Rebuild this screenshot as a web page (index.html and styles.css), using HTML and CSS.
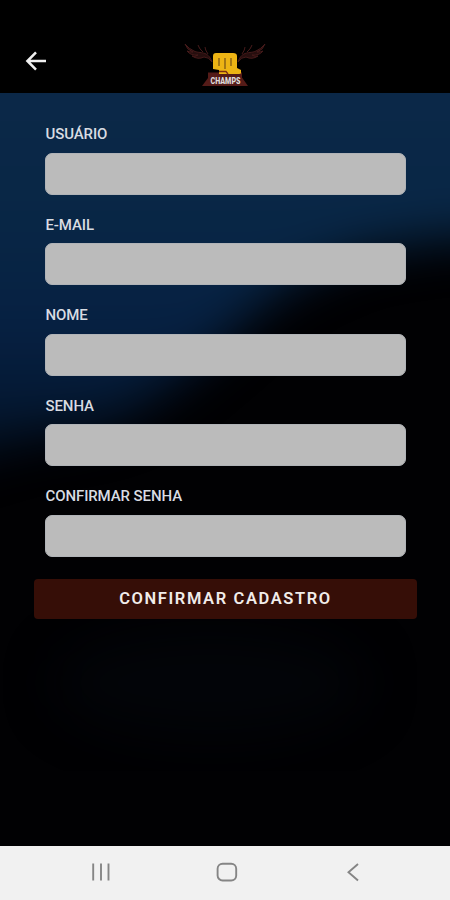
FILE: index.html
```html
<!DOCTYPE html>
<html lang="pt-BR">
<head>
<meta charset="utf-8">
<meta name="viewport" content="width=device-width, initial-scale=1">
<title>Cadastro</title>
<link rel="stylesheet" href="styles.css">
</head>
<body>
<div class="screen">
  <header class="topbar">
    <a class="back" href="#" aria-label="Voltar">
      <svg width="24" height="22" viewBox="0 0 24 22"><path d="M22 11H3.5M12 2.4 3.4 11l8.6 8.6"/></svg>
    </a>
    <svg class="logo" width="84" height="44" viewBox="0 0 84 44">
      <g class="wings">
        <path d="M29 19C25 7 17 11 11 8Q6 6 2 1Q4 7 10 9Q6 9 4 8Q8 13 15 12Q12 14 9 13Q15 17 21 14Q26 14 29 19Z"/>
        <path d="M20 9Q16 6 15 2M25 11Q22 7 22 4"/>
        <path d="M55 19C59 7 67 11 73 8Q78 6 82 1Q80 7 74 9Q78 9 80 8Q76 13 69 12Q72 14 75 13Q69 17 63 14Q58 14 55 19Z"/>
        <path d="M64 9Q68 6 69 2M59 11Q62 7 62 4"/>
      </g>
      <path class="banner" d="M25 29.5h34v5l6 8.5H19l6-8z"/>
      <path class="fist" d="M30 13q0-3 3-3h17q4 0 4 3v12l4 2v3q0 1-2 1H36v-4l-6-1z"/>
      <path class="fingers" d="M36 15v8M42 15v11M48 15v8"/>
      <path class="thumb" d="M36 28.5h7l2 2.5"/>
      <text class="wordmark" x="42.5" y="41.4" text-anchor="middle" textLength="30" lengthAdjust="spacingAndGlyphs">CHAMPS</text>
    </svg>
  </header>
  <main class="content">
    <svg class="backdrop" viewBox="0 0 450 753" preserveAspectRatio="none" aria-hidden="true">
      <defs>
        <linearGradient id="sky" x1="0" y1="0" x2="0" y2="380" gradientUnits="userSpaceOnUse">
          <stop offset="0" stop-color="#0b2848"/>
          <stop offset=".35" stop-color="#082645"/>
          <stop offset=".62" stop-color="#062042"/>
          <stop offset=".85" stop-color="#041730"/>
          <stop offset="1" stop-color="#020d1c"/>
        </linearGradient>
        <filter id="soft" x="-30%" y="-30%" width="160%" height="160%" color-interpolation-filters="sRGB"><feGaussianBlur stdDeviation="24"/></filter>
      </defs>
      <rect width="450" height="753" fill="#010103"/>
      <ellipse cx="210" cy="590" rx="155" ry="55" fill="#020408" filter="url(#soft)"/>
      <path d="M-100-100H550V144L445 146 360 160 300 186 258 216 225 248 175 290 125 326 80 338 30 345-70 375Z" fill="url(#sky)" filter="url(#soft)"/>
    </svg>
    <form class="form">
      <label class="field"><span class="label">USUÁRIO</span><input class="input" type="text"></label>
      <label class="field"><span class="label">E-MAIL</span><input class="input" type="email"></label>
      <label class="field"><span class="label">NOME</span><input class="input" type="text"></label>
      <label class="field"><span class="label">SENHA</span><input class="input" type="password"></label>
      <label class="field"><span class="label">CONFIRMAR SENHA</span><input class="input" type="password"></label>
      <button class="submit" type="button">CONFIRMAR CADASTRO</button>
    </form>
  </main>
  <nav class="navbar">
    <svg width="24" height="24" viewBox="0 0 24 24"><path d="M4.2 3.5v17M12 3.5v17M19.5 3.5v17"/></svg>
    <svg width="24" height="24" viewBox="0 0 24 24"><rect x="2.6" y="3.7" width="18.6" height="16.8" rx="5"/></svg>
    <svg width="24" height="24" viewBox="0 0 24 24"><path d="M17 4 7.5 12.3 17 20.5"/></svg>
  </nav>
</div>
</body>
</html>
```
FILE: styles.css
```css
* { box-sizing: border-box; }

body {
  margin: 0;
  background: #000;
  font-family: Roboto, "Liberation Sans", sans-serif;
}

.screen {
  height: 900px;
  display: flex;
  flex-direction: column;
  overflow: hidden;
}

.topbar {
  height: 93px;
  flex: none;
  display: grid;
  grid-template-columns: 1fr auto 1fr;
  align-items: end;
  padding: 0 24px 6px;
  background: #000;
}

.back { display: flex; margin-bottom: 15px; }
.back path { fill: none; stroke: #f0f0f0; stroke-width: 2.5; }

.wings { fill: #260e0e; stroke: #451a1a; stroke-width: 1; }
.banner { fill: #541b18; }
.fist { fill: #edb414; }
.fingers { fill: none; stroke: #755015; stroke-width: 1.2; }
.thumb { fill: none; stroke: #7c2c12; stroke-width: 1.3; }
.wordmark { fill: #dedada; font-size: 9px; font-weight: 900; }

.content {
  position: relative;
  flex: 1;
  min-height: 0;
  overflow: hidden;
}

.backdrop {
  position: absolute;
  inset: 0;
  width: 100%;
  height: 100%;
}

.form {
  position: relative;
  display: flex;
  flex-direction: column;
  padding: 32px 33px 0 34px;
}

.field {
  height: 90.5px;
  display: flex;
  flex-direction: column;
  padding: 0 11px;
}

.label {
  height: 27.5px;
  padding-left: .5px;
  color: #d8dce2;
  font-size: 15px;
  font-weight: 500;
  line-height: 18px;
  letter-spacing: -.1px;
  white-space: nowrap;
}

.input {
  width: 100%;
  height: 42px;
  border: 1px solid #b0b3b7;
  border-radius: 7px;
  background: #bbb;
  padding: 0 12px;
  font: inherit;
}

.submit {
  height: 40px;
  margin-top: 1.5px;
  padding: 0 0 2px;
  border: 0;
  border-radius: 4px;
  background: #360e07;
  color: #f1ecea;
  font-family: inherit;
  font-size: 16.5px;
  font-weight: 600;
  letter-spacing: 1.6px;
}

.navbar {
  height: 54px;
  flex: none;
  display: flex;
  justify-content: space-between;
  align-items: center;
  padding: 0 85px 2px 89px;
  background: #f1f1f1;
}

.navbar svg { fill: none; stroke: #858585; stroke-width: 1.9; }
```
